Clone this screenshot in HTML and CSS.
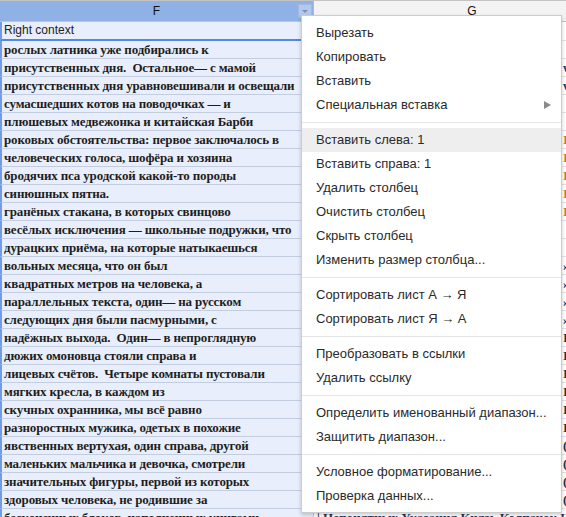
FILE: index.html
```html
<!DOCTYPE html>
<html lang="ru">
<head>
<meta charset="utf-8">
<title>Sheet</title>
<link rel="stylesheet" href="styles.css">
</head>
<body>
<div class="sheet">
  <div class="row head">
    <div class="cell f"><span class="hl-label">F</span><span class="dd"><span class="dd-tri"></span></span></div>
    <div class="cell g">G</div>
  </div>
  <div class="row ctx">
    <div class="cell f">Right context</div>
    <div class="cell g"></div>
  </div>
  <div class="row"><div class="cell f">рослых латника уже подбирались к</div><div class="cell g"></div></div>
  <div class="row"><div class="cell f">присутственных дня.  Остальное— с мамой</div><div class="cell g edge navy">w</div></div>
  <div class="row"><div class="cell f">присутственных дня уравновешивали и освещали</div><div class="cell g edge navy">w</div></div>
  <div class="row"><div class="cell f">сумасшедших котов на поводочках — и</div><div class="cell g"></div></div>
  <div class="row"><div class="cell f">плюшевых медвежонка и китайская Барби</div><div class="cell g"></div></div>
  <div class="row"><div class="cell f">роковых обстоятельства: первое заключалось в</div><div class="cell g edge amber">I</div></div>
  <div class="row"><div class="cell f">человеческих голоса, шофёра и хозяина</div><div class="cell g edge amber">I</div></div>
  <div class="row"><div class="cell f">бродячих пса уродской какой-то породы</div><div class="cell g edge amber">I</div></div>
  <div class="row"><div class="cell f">синюшных пятна.</div><div class="cell g edge amber">I</div></div>
  <div class="row"><div class="cell f">гранёных стакана, в которых свинцово</div><div class="cell g edge amber">I</div></div>
  <div class="row"><div class="cell f">весёлых исключения — школьные подружки, что</div><div class="cell g"></div></div>
  <div class="row"><div class="cell f">дурацких приёма, на которые натыкаешься</div><div class="cell g"></div></div>
  <div class="row"><div class="cell f">вольных месяца, что он был</div><div class="cell g edge navy">»</div></div>
  <div class="row"><div class="cell f">квадратных метров на человека, а</div><div class="cell g edge navy">»</div></div>
  <div class="row"><div class="cell f">параллельных текста, один— на русском</div><div class="cell g edge navy">»</div></div>
  <div class="row"><div class="cell f">следующих дня были пасмурными, с</div><div class="cell g edge navy">»</div></div>
  <div class="row"><div class="cell f">надёжных выхода.  Один— в непроглядную</div><div class="cell g edge dark">I</div></div>
  <div class="row"><div class="cell f">дюжих омоновца стояли справа и</div><div class="cell g edge dark">I</div></div>
  <div class="row"><div class="cell f">лицевых счётов.  Четыре комнаты пустовали</div><div class="cell g edge dark">I</div></div>
  <div class="row"><div class="cell f">мягких кресла, в каждом из</div><div class="cell g edge dark">I</div></div>
  <div class="row"><div class="cell f">скучных охранника, мы всё равно</div><div class="cell g edge dark">I</div></div>
  <div class="row"><div class="cell f">разноростных мужика, одетых в похожие</div><div class="cell g edge dark">I</div></div>
  <div class="row"><div class="cell f">явственных вертухая, один справа, другой</div><div class="cell g edge dark">(</div></div>
  <div class="row"><div class="cell f">маленьких мальчика и девочка, смотрели</div><div class="cell g edge dark">(</div></div>
  <div class="row"><div class="cell f">значительных фигуры, первой из которых</div><div class="cell g edge dark">(</div></div>
  <div class="row"><div class="cell f">здоровых человека, не родившие за</div><div class="cell g edge dark">(</div></div>
  <div class="row"><div class="cell f">бесконечных блоков, наполненных книгами</div><div class="cell g gtext">| Непонятных Указания Князь Колпачок Шляпа</div></div>
</div>

<div class="menu">
  <div class="item">Вырезать</div>
  <div class="item">Копировать</div>
  <div class="item">Вставить</div>
  <div class="item">Специальная вставка<span class="arrow"></span></div>
  <div class="sep"></div>
  <div class="item active">Вставить слева: 1</div>
  <div class="item">Вставить справа: 1</div>
  <div class="item">Удалить столбец</div>
  <div class="item">Очистить столбец</div>
  <div class="item">Скрыть столбец</div>
  <div class="item">Изменить размер столбца...</div>
  <div class="sep"></div>
  <div class="item">Сортировать лист А → Я</div>
  <div class="item">Сортировать лист Я → А</div>
  <div class="sep"></div>
  <div class="item">Преобразовать в ссылки</div>
  <div class="item">Удалить ссылку</div>
  <div class="sep"></div>
  <div class="item">Определить именованный диапазон...</div>
  <div class="item">Защитить диапазон...</div>
  <div class="sep"></div>
  <div class="item">Условное форматирование...</div>
  <div class="item">Проверка данных...</div>
</div>
</body>
</html>
```

FILE: styles.css
```css
html, body {
  margin: 0;
  padding: 0;
}
body {
  width: 566px;
  height: 517px;
  overflow: hidden;
  position: relative;
  background: #ffffff;
  font-family: "Liberation Sans", Arial, sans-serif;
}
.sheet {
  display: flex;
  flex-direction: column;
  width: 700px;
}
.row {
  display: flex;
  height: 18px;
  flex: none;
}
.cell {
  box-sizing: border-box;
  height: 100%;
  flex: none;
  overflow: hidden;
  white-space: pre;
  line-height: 17px;
  padding-left: 4px;
}
.f {
  width: 314px;
  background: #e8eefb;
  border-left: 2px solid #6f9be8;
  border-right: 1px solid #c6cfdf;
  border-bottom: 1px solid #c3cde0;
  padding-left: 2px;
  font: bold 13px "Liberation Serif", "Times New Roman", serif;
  letter-spacing: -0.15px;
  line-height: 17px;
  color: #1e1e1e;
}
.g {
  width: 360px;
  background: #ffffff;
  border-bottom: 1px solid #e2e2e2;
  font: bold 13px "Liberation Serif", "Times New Roman", serif;
  line-height: 17px;
}
.edge {
  padding-left: 249px;
}
.navy { color: #20335e; }
.amber { color: #b9802a; }
.dark { color: #2a2a3a; }
.gtext {
  color: #1f3560;
  padding-left: 3px;
}

/* header */
.head {
  height: 22px;
}
.head .cell {
  border-top: 1px solid #c4c4c4;
  border-bottom: 1px solid #c4c4c4;
  font: 12px "Liberation Sans", Arial, sans-serif;
  letter-spacing: 0;
  line-height: 20px;
  color: #111;
  text-align: center;
  padding-left: 0;
}
.head .f {
  background: #8fb1e6;
  border-left: none;
  border-right: 1px solid #a9bcd9;
  position: relative;
}
.head .g {
  background: #f3f3f3;
  width: 316px;
}
.hl-label {
  display: inline-block;
}
.dd {
  position: absolute;
  right: 1px;
  top: 3px;
  width: 12px;
  height: 12px;
  background: #b3c8ec;
  border: 1px solid #a3b9df;
  display: flex;
  align-items: center;
  justify-content: center;
}
.dd-tri {
  width: 0;
  height: 0;
  border-left: 3px solid transparent;
  border-right: 3px solid transparent;
  border-top: 3px solid #7f8ea8;
}

/* context row */
.ctx {
  height: 19px;
}
.ctx .f {
  font: 12px "Liberation Sans", Arial, sans-serif;
  letter-spacing: 0;
  line-height: 17px;
  color: #222;
  border-bottom: 2px solid #4f88e6;
  padding-left: 2px;
}

/* menu */
.menu {
  position: absolute;
  left: 301px;
  top: 15px;
  width: 261px;
  box-sizing: border-box;
  background: #ffffff;
  border: 1px solid rgba(0, 0, 0, 0.2);
  box-shadow: 0 2px 4px rgba(0, 0, 0, 0.2);
  padding: 5px 0 4px;
  font: 13px "Liberation Sans", Arial, sans-serif;
  color: #2a2a2a;
}
.item {
  height: 24px;
  line-height: 24px;
  padding: 0 10px 0 14px;
  display: flex;
  align-items: center;
  justify-content: space-between;
  white-space: nowrap;
}
.item.active {
  background: #eeeeee;
}
.sep {
  border-top: 1px solid #e5e5e5;
  margin: 5px 0;
}
.arrow {
  width: 0;
  height: 0;
  border-top: 4px solid transparent;
  border-bottom: 4px solid transparent;
  border-left: 7px solid #8a8a8a;
}
```
